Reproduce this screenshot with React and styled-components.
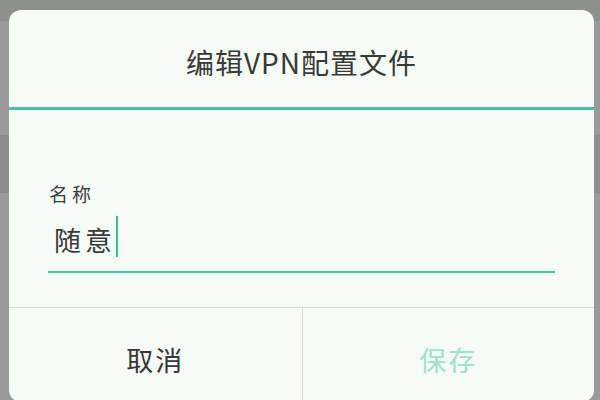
import React from "react"
import styled, { createGlobalStyle } from "styled-components"

const GlobalStyle = createGlobalStyle`
    html, body {
        margin: 0;
        padding: 0;
        width: 600px;
        height: 400px;
        overflow: hidden;
        font-family: "Noto Sans CJK SC", "Noto Sans", sans-serif;
    }
`

const App = () => {
    return (
        <Screen>
            <GlobalStyle />
            <Backdrop>
                <StatusBar />
                <ListRow height={115} />
                <ListRow height={57} dark />
                <ListRow height={208} />
            </Backdrop>
            <Dialog>
                <Header>
                    <Title>编辑VPN配置文件</Title>
                </Header>
                <Body>
                    <FieldLabel>名称</FieldLabel>
                    <InputLine>
                        <InputText>随意</InputText>
                        <Caret />
                    </InputLine>
                </Body>
                <Footer>
                    <ActionButton>取消</ActionButton>
                    <ActionButton primary disabled>保存</ActionButton>
                </Footer>
            </Dialog>
        </Screen>
    )
}

const Screen = styled.div`
            position: relative;
            width: 600px;
            height: 400px;
            overflow: hidden;
            background: #979997;`

const Backdrop = styled.div`
            display: flex;
            flex-direction: column;
            height: 100%;`

const StatusBar = styled.div`
            height: 20px;
            background: #8e908d;`

const ListRow = styled.div`
            height: ${p => p.height}px;
            background: ${p => p.dark ? "#8d8e8d" : "#999a99"};
            border-top: 1px solid #8a8b8a;
            box-sizing: border-box;`

const Dialog = styled.div`
            position: absolute;
            top: 10px;
            left: 9px;
            width: 585px;
            height: 392px;
            background: #f6fbf7;
            border-radius: 12px;
            display: flex;
            flex-direction: column;
            overflow: hidden;`

const Header = styled.div`
            height: 100px;
            box-sizing: border-box;
            padding-top: 6px;
            display: flex;
            align-items: center;
            justify-content: center;
            border-bottom: 3px solid #44c3a4;`

const Title = styled.div`
            font-size: 28px;
            line-height: 28px;
            color: #383938;
            letter-spacing: 1px;`

const Body = styled.div`
            height: 197px;
            box-sizing: border-box;
            padding: 75px 39px 0 39px;`

const FieldLabel = styled.div`
            font-size: 19px;
            line-height: 17px;
            color: #3c3d3c;
            padding-left: 1px;
            letter-spacing: 4px;`

const InputLine = styled.div`
            margin-top: 14px;
            height: 57px;
            box-sizing: border-box;
            border-bottom: 2px solid #44c3a4;
            display: flex;
            align-items: flex-start;`

const InputText = styled.div`
            margin-top: 10px;
            padding-left: 6px;
            font-size: 27px;
            line-height: 27px;
            color: #383938;
            letter-spacing: 4px;`

const Caret = styled.div`
            width: 2px;
            height: 41px;
            background: #2fc08e;`

const Footer = styled.div`
            flex: 1;
            display: grid;
            grid-template-columns: 1fr 1fr;
            border-top: 1px solid #d6dcd8;`

const ActionButton = styled.div`
            display: flex;
            justify-content: center;
            align-items: flex-start;
            padding-top: 38px;
            font-size: 27px;
            line-height: 27px;
            letter-spacing: 2px;
            color: ${p => p.primary ? "#9ee2cd" : "#353635"};
            & + & {
                border-left: 1px solid #d6dcd8;
            }`

export default App
